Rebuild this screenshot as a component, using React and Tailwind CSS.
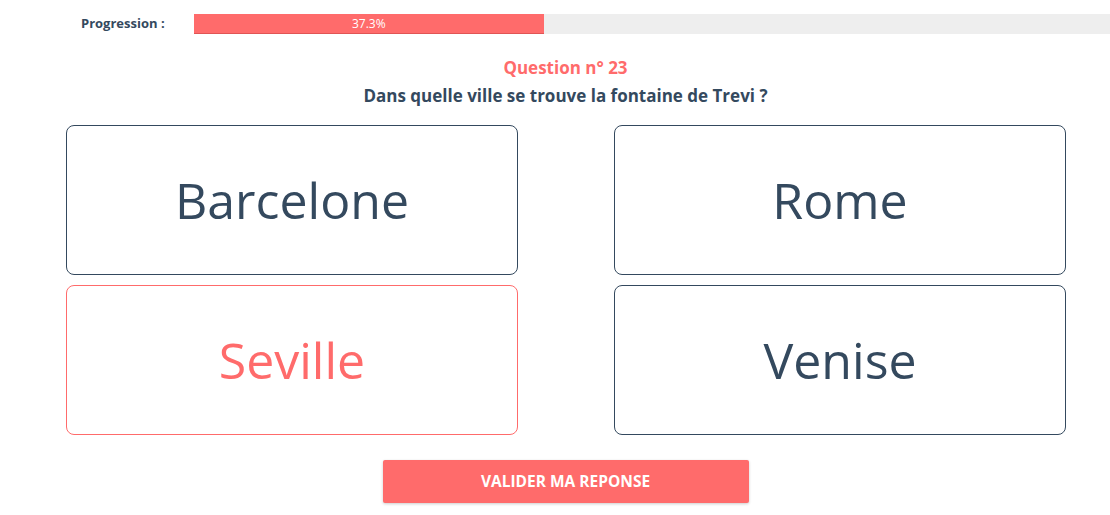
import React, { useState } from "react";

const answers = ["Barcelone", "Rome", "Seville", "Venise"];

export default function App() {
  const [selected, setSelected] = useState("Seville");
  const progress = 37.3;

  return (
    <div className="w-[1110px] h-[515px] overflow-hidden bg-white font-['Open_Sans',sans-serif] text-[#34495e]">
      <div className="w-[1131px]">
        {/* progression */}
        <div className="flex items-center h-[20px] mt-[14px]">
          <div className="w-[194px] pl-[81px] text-[13px] font-bold">Progression :</div>
          <div className="flex-1 h-[20px] bg-[#eeeeee]">
            <div
              className="h-full bg-[#ff6b6b] border-b border-[#e05555] text-white text-[12px] leading-[19px] text-center"
              style={{ width: `${progress}%` }}
            >
              {progress}%
            </div>
          </div>
        </div>

        {/* question */}
        <div className="text-center mt-[22px]">
          <div className="text-[17px] font-bold text-[#ff6b6b] leading-[23px]">Question n° 23</div>
          <div className="text-[17px] font-bold leading-[22px] mt-[6px]">
            Dans quelle ville se trouve la fontaine de Trevi ?
          </div>
        </div>

        {/* answers */}
        <div className="grid grid-cols-[452px_452px] gap-x-[96px] gap-y-[10px] ml-[66px] mt-[18px]">
          {answers.map((a) => (
            <button
              key={a}
              onClick={() => setSelected(a)}
              className={`h-[150px] rounded-[8px] border bg-white text-[50px] ${
                selected === a ? "border-[#ff6b6b] text-[#ff6b6b]" : "border-[#34495e] text-[#34495e]"
              }`}
            >
              {a}
            </button>
          ))}
        </div>

        {/* submit */}
        <div className="flex justify-center mt-[25px]">
          <button className="w-[366px] h-[43px] rounded-[2px] bg-[#ff6b6b] text-white text-[15.5px] font-bold uppercase shadow-[0_1px_3px_rgba(0,0,0,0.2)]">
            Valider ma reponse
          </button>
        </div>
      </div>
    </div>
  );
}
